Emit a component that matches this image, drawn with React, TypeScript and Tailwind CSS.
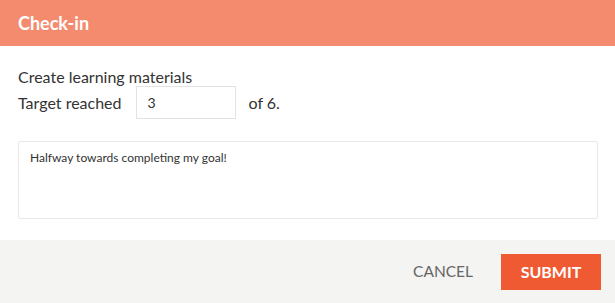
export default function App() {
  return (
    <div className="w-[615px] h-[303px] bg-white font-['Lato','Liberation_Sans',sans-serif] flex flex-col">
      <div className="h-[46px] bg-[#f48b6f] flex items-center px-[18px]">
        <h1 className="text-white text-[18px] font-bold">Check-in</h1>
      </div>

      <div className="flex-1 px-[18px] pt-[21px]">
        <p className="text-[16px] leading-[19px] text-[#333]">Create learning materials</p>
        <div className="flex items-center text-[16px] text-[#333]">
          <span>Target reached</span>
          <input
            defaultValue="3"
            className="ml-[14px] w-[100px] h-[33px] border border-[#e3e3e3] px-[11px] text-[14px] text-[#333] outline-none"
          />
          <span className="ml-[13px]">of 6.</span>
        </div>
        <textarea
          defaultValue="Halfway towards completing my goal!"
          className="mt-[22px] block w-[580px] h-[78px] border border-[#e8e8e8] rounded-[2px] px-[11px] py-[8px] text-[12px] leading-[16px] text-[#333] resize-none outline-none"
        />
      </div>

      <div className="h-[63px] bg-[#f4f4f2] flex items-center justify-end pr-[14px]">
        <button className="text-[15.5px] text-[#666] mr-[28px]">CANCEL</button>
        <button className="w-[100px] h-[36px] bg-[#f05a33] text-white text-[16px] font-bold">SUBMIT</button>
      </div>
    </div>
  );
}
